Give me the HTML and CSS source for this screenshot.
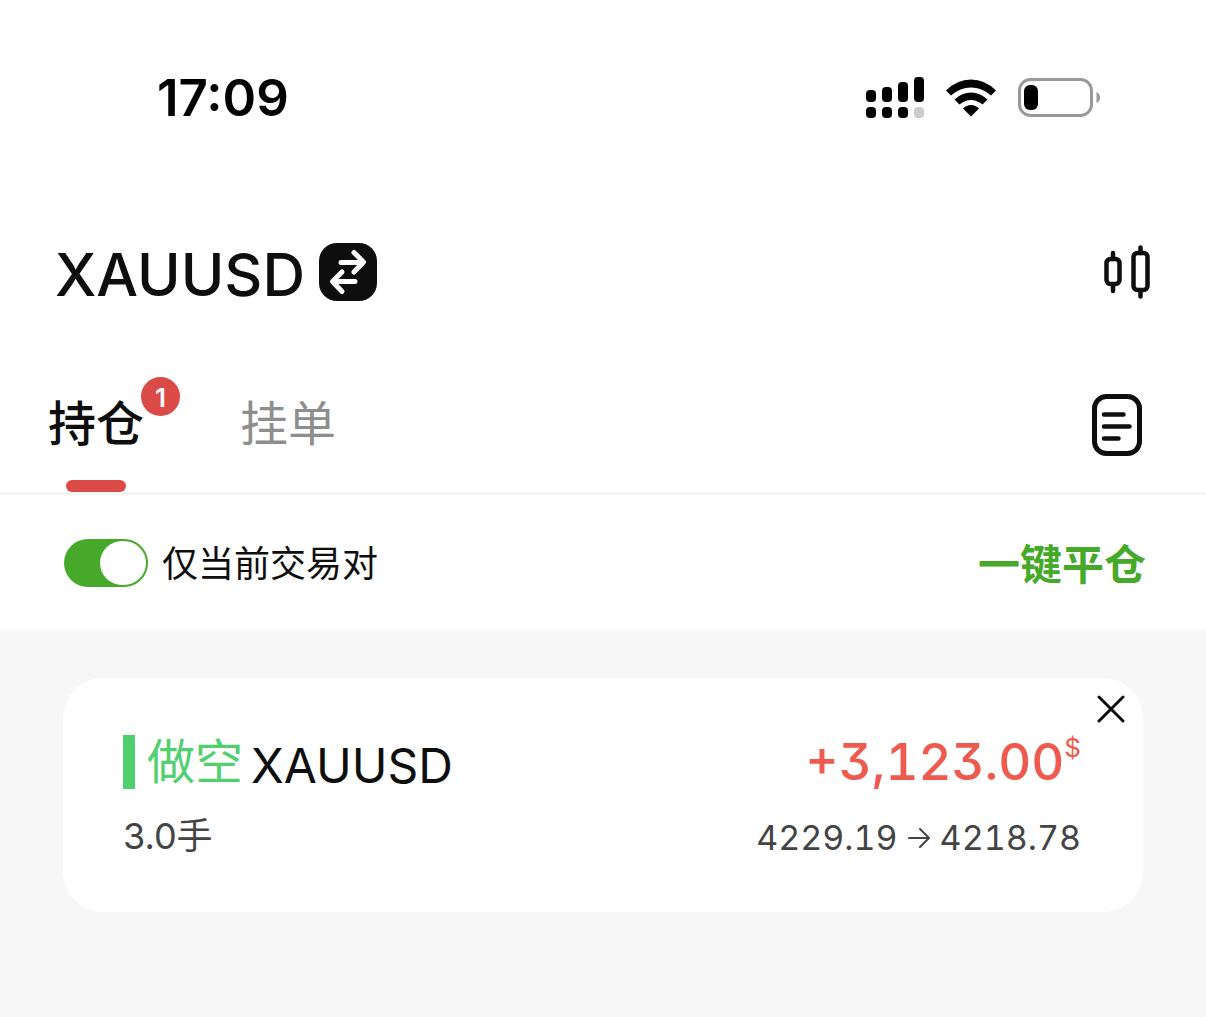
FILE: index.html
```
<!DOCTYPE html>
<html lang="zh-CN">
<head>
  <meta charset="UTF-8">
  <meta name="viewport" content="width=device-width, initial-scale=1">
  <title>XAUUSD</title>
  <link rel="stylesheet" href="styles.css">
</head>
<body>
  <div class="status-bar">
    <span class="time">17:09</span>
    <div class="status-icons">
      <svg width="58" height="42" viewBox="0 0 58 42">
        <rect x="0" y="13" width="10" height="12" rx="4"/>
        <rect x="16" y="10" width="10" height="15" rx="4"/>
        <rect x="32" y="5" width="10" height="20" rx="4"/>
        <rect x="48" y="0" width="10" height="25" rx="4"/>
        <rect x="0" y="30" width="10" height="11" rx="4"/>
        <rect x="16" y="30" width="10" height="11" rx="4"/>
        <rect x="32" y="30" width="10" height="11" rx="4"/>
        <rect x="48" y="30" width="10" height="11" rx="4" fill="#ccc"/>
      </svg>
      <svg width="50" height="38" viewBox="0 0 50 38">
        <path d="M0 11.500Q11 0.500 25 0.500T50 11.500L45 16.500Q36 8.500 25 8.500T5 16.500Z"/>
        <path d="M8.500 20.500Q16 13.500 25 13.500T41.500 20.500L36.500 25.500Q31 21 25 21T13.500 25.500Z"/>
        <path d="M17 29.500Q20.500 26 25 26T33 29.500L25 37.500Z"/>
      </svg>
      <svg width="82" height="40" viewBox="0 0 82 40">
        <rect x="1.500" y="1.500" width="72" height="36" rx="11" fill="none" stroke="#999" stroke-width="3"/>
        <rect x="6" y="7" width="14" height="25" rx="6"/>
        <path d="M78.500 14Q82 15.500 82 19.500T78.500 25Z" fill="#999"/>
      </svg>
    </div>
  </div>

  <header class="header">
    <h1>XAUUSD</h1>
    <button class="icon-button" aria-label="切换交易对">
      <svg width="58" height="58" viewBox="0 0 58 58">
        <rect width="58" height="58" rx="18" fill="#0e0e0e"/>
        <g fill="none" stroke="#fff" stroke-width="5" stroke-linecap="round" stroke-linejoin="round">
          <path d="M22 19.500H44M35 9.500L44.500 19L35 29"/>
          <path d="M36 38.500H14M23 29L13.500 38.500L23 48.500"/>
        </g>
      </svg>
    </button>
    <button class="icon-button push-right" aria-label="K线图">
      <svg width="46" height="54" viewBox="0 0 46 54" fill="none" stroke="#0e0e0e" stroke-width="4.500" stroke-linecap="round">
        <rect x="2.500" y="14" width="13" height="25" rx="4"/>
        <path d="M9 8V14M9 40V46"/>
        <rect x="29.500" y="8" width="14" height="37" rx="4"/>
        <path d="M36.500 2.500V8M36.500 46V51.500"/>
      </svg>
    </button>
  </header>

  <nav class="tabs">
    <button class="tab active">持仓<span class="badge">1</span></button>
    <button class="tab">挂单</button>
    <button class="icon-button push-right" aria-label="历史记录">
      <svg width="50" height="62" viewBox="0 0 50 62" fill="none" stroke="#0e0e0e" stroke-linecap="round">
        <rect x="2.500" y="2.500" width="45" height="57" rx="12" stroke-width="5"/>
        <path d="M12 20.500H31.500M12 32.500H37.500M12 44.500H26.500" stroke-width="4.500"/>
      </svg>
    </button>
  </nav>

  <div class="filter">
    <label class="filter-label">
      <input type="checkbox" class="toggle" checked>
      <span>仅当前交易对</span>
    </label>
    <button class="close-all">一键平仓</button>
  </div>

  <main class="positions">
    <article class="card">
      <button class="icon-button card-close" aria-label="平仓">
        <svg width="28" height="28" viewBox="0 0 28 28" fill="none" stroke="#0e0e0e" stroke-width="3" stroke-linecap="round">
          <path d="M2 2L26 26M26 2L2 26"/>
        </svg>
      </button>
      <div class="card-row">
        <div class="pair">
          <span class="side">做空</span>
          <span class="symbol">XAUUSD</span>
        </div>
        <div class="profit">+3,123.00<span class="currency">$</span></div>
      </div>
      <div class="card-row details">
        <span>3.0手</span>
        <div class="prices">
          <span>4229.19</span>
          <svg width="22" height="22" viewBox="0 0 22 22" fill="none" stroke="#444" stroke-width="2" stroke-linecap="round" stroke-linejoin="round">
            <path d="M1 11H20M12 2L21 11L12 20"/>
          </svg>
          <span>4218.78</span>
        </div>
      </div>
    </article>
  </main>
</body>
</html>
```
FILE: styles.css
```
* {
  box-sizing: border-box;
}
body {
  margin: 0;
  min-height: 100vh;
  display: flex;
  flex-direction: column;
  background: #fff;
  color: #0e0e0e;
  font-family: Inter, "Noto Sans CJK SC", sans-serif;
}
button {
  padding: 0;
  border: none;
  background: none;
  color: inherit;
  font: inherit;
  cursor: pointer;
}
svg {
  display: block;
}
.push-right {
  margin-left: auto;
}

.status-bar {
  display: flex;
  justify-content: space-between;
  align-items: center;
  padding: 68px 106px 0 157px;
  color: #000;
}
.time {
  font-size: 51px;
  font-weight: 600;
  line-height: 60px;
}
.status-icons {
  display: flex;
  align-items: center;
  gap: 22px;
}

.header {
  display: flex;
  align-items: center;
  gap: 14px;
  padding: 105px 56px 0 55px;
}
.header h1 {
  margin: 0;
  padding-top: 6px;
  font-size: 59px;
  font-weight: 500;
  line-height: 72px;
}

.tabs {
  display: flex;
  align-items: center;
  gap: 96px;
  height: 138px;
  margin-top: 46px;
  padding: 0 64px 0 48px;
  border-bottom: 3px solid #f5f5f5;
}
.tab {
  position: relative;
  height: 100%;
  padding-bottom: 10px;
  color: #8e8e8e;
  font-size: 48px;
}
.tab.active {
  color: #0e0e0e;
  font-weight: 500;
}
.tab.active::after {
  content: "";
  position: absolute;
  bottom: 0;
  left: 18px;
  width: 60px;
  height: 12px;
  border-radius: 6px;
  background: #da4a47;
}
.badge {
  position: absolute;
  top: 20px;
  left: 93px;
  width: 39px;
  height: 39px;
  border-radius: 50%;
  background: #da4a47;
  color: #fff;
  font-size: 26px;
  font-weight: 600;
  line-height: 42px;
}

.filter {
  display: flex;
  justify-content: space-between;
  align-items: center;
  height: 135px;
  padding: 0 60px 0 64px;
}
.filter-label {
  display: flex;
  align-items: center;
  gap: 14px;
  font-size: 36px;
  cursor: pointer;
}
.filter-label span,
.close-all {
  padding-bottom: 3px;
}
.toggle {
  appearance: none;
  width: 84px;
  height: 48px;
  margin: 0;
  padding: 2px;
  border-radius: 24px;
  background: #ccc;
  cursor: pointer;
}
.toggle::before {
  content: "";
  display: block;
  width: 46px;
  height: 44px;
  border-radius: 22px;
  background: #fff;
}
.toggle:checked {
  background: #46a92a;
}
.toggle:checked::before {
  margin-left: auto;
}
.close-all {
  color: #46a92a;
  font-size: 42px;
  font-weight: 700;
}

.positions {
  flex: 1;
  padding: 48px 63px;
  background: #f7f7f7;
}
.card {
  position: relative;
  padding: 48px 62px 48px 60px;
  border-radius: 40px;
  background: #fff;
}
.card-close {
  position: absolute;
  top: 17px;
  right: 18px;
}
.card-row {
  display: flex;
  justify-content: space-between;
  align-items: center;
}
.pair {
  display: flex;
  align-items: center;
  gap: 8px;
  font-size: 48px;
  line-height: 64px;
}
.side {
  display: flex;
  align-items: center;
  gap: 12px;
  color: #52cf6f;
}
.side::before {
  content: "";
  width: 12px;
  height: 54px;
  background: #4fd06e;
}
.symbol {
  padding-top: 8px;
}
.profit,
.prices {
  font-feature-settings: "tnum", "cv09";
}
.profit {
  display: flex;
  align-items: flex-start;
  color: #ee5a4d;
  font-size: 51px;
  font-weight: 500;
  line-height: 64px;
}
.currency {
  font-size: 26px;
  font-weight: 400;
  line-height: 36px;
}
.details {
  margin-top: 10px;
  color: #444;
  font-size: 36px;
  line-height: 52px;
}
.prices {
  display: flex;
  align-items: center;
  gap: 10px;
  padding-top: 4px;
  font-size: 34px;
}
```
